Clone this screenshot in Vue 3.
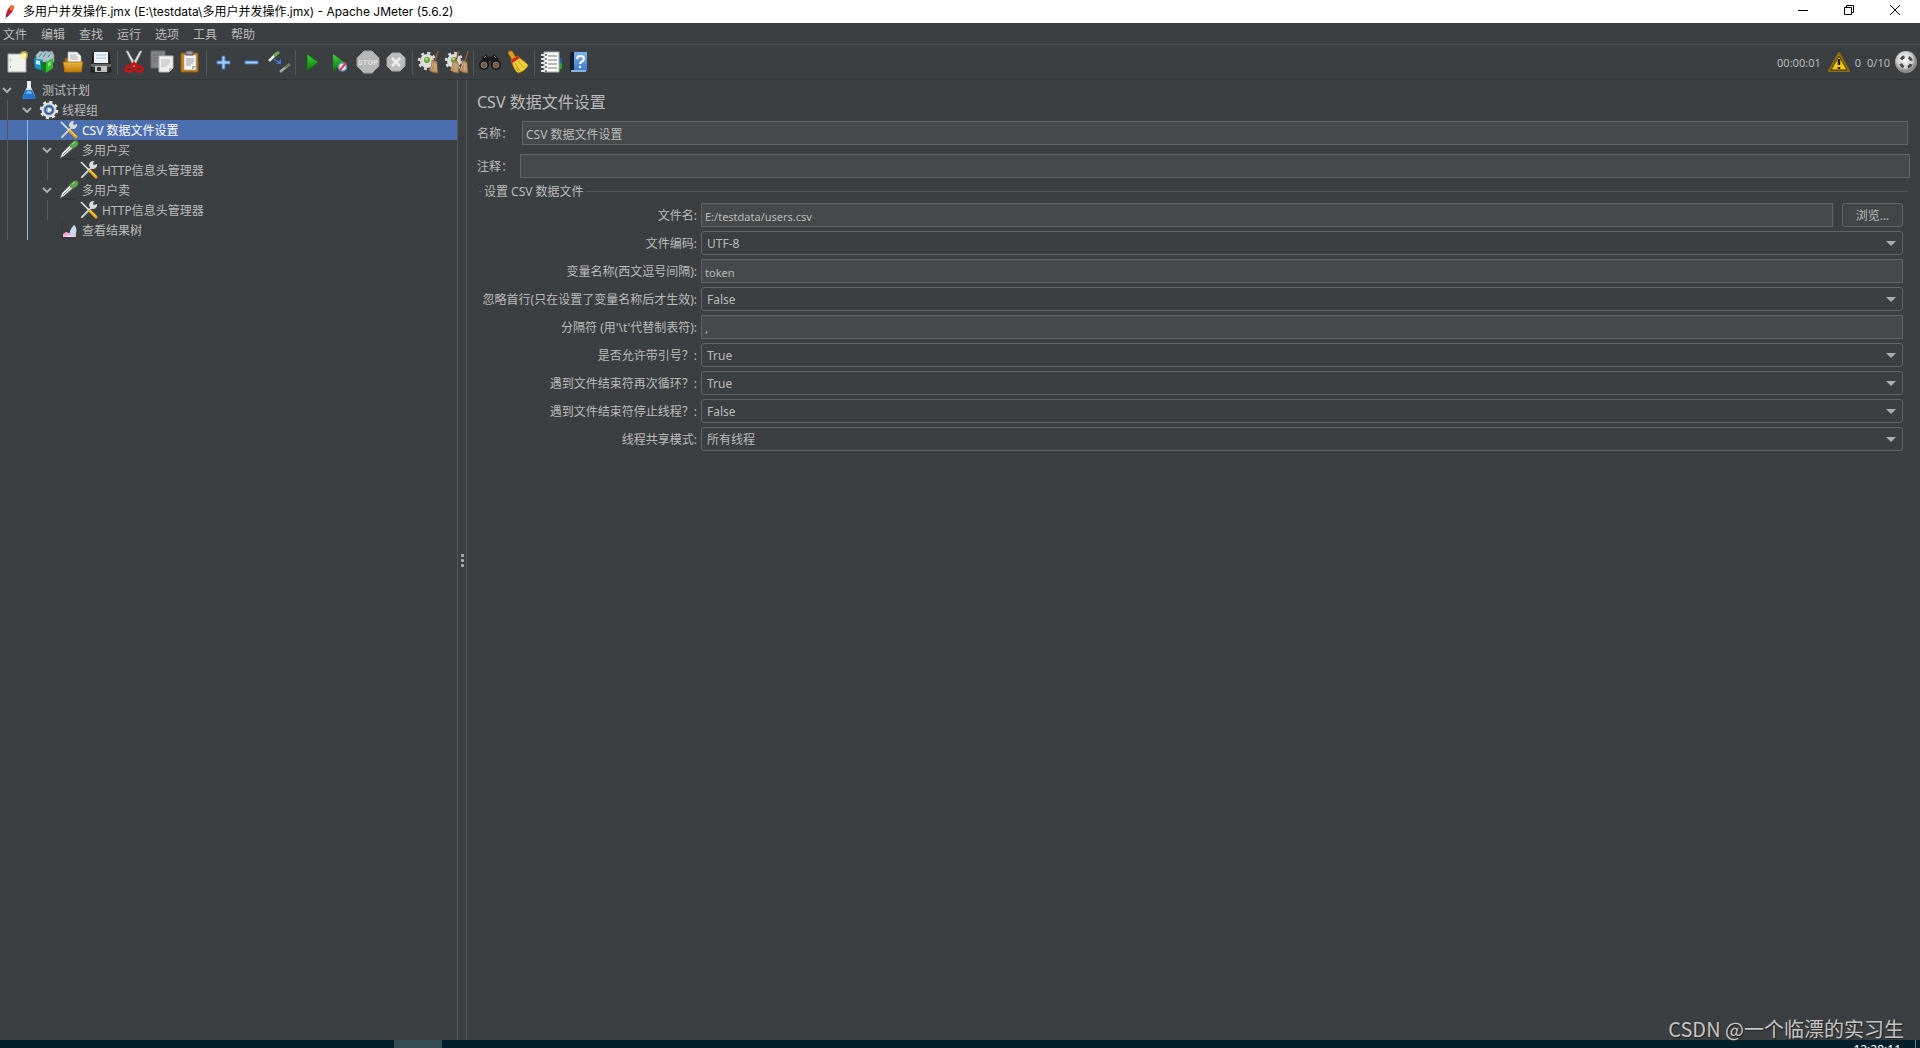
<script setup>
import { ref } from 'vue'

const menus = ['文件', '编辑', '查找', '运行', '选项', '工具', '帮助']

const toolGroups = [
  [['new', '新建'], ['templates', '模板'], ['open', '打开'], ['save', '保存']],
  [['cut', '剪切'], ['copy', '复制'], ['paste', '粘贴']],
  [['plus', '展开'], ['minus', '折叠'], ['toggle', '切换']],
  [['start', '启动'], ['start-no-pause', '不停顿开始'], ['stop', '停止'], ['shutdown', '关闭']],
  [['clear', '清除'], ['clear-all', '清除全部']],
  [['search', '查找'], ['broom', '重置搜索']],
  [['functions', '函数助手'], ['help', '帮助']]
]

const tree = [
  { label: '测试计划', icon: 'flask', open: true, guides: [] },
  { label: '线程组', icon: 'gear', open: true, guides: ['dim'] },
  { label: 'CSV 数据文件设置', icon: 'tools', selected: true, guides: ['dim', 'lit'] },
  { label: '多用户买', icon: 'pipette', open: true, guides: ['dim', 'lit'] },
  { label: 'HTTP信息头管理器', icon: 'tools', guides: ['dim', 'lit', 'dim'] },
  { label: '多用户卖', icon: 'pipette', open: true, guides: ['dim', 'lit'] },
  { label: 'HTTP信息头管理器', icon: 'tools', guides: ['dim', 'lit', 'dim'] },
  { label: '查看结果树', icon: 'chart', guides: ['dim', 'lit'] }
]

const name = ref('CSV 数据文件设置')
const comment = ref('')

const bools = ['True', 'False']
const fields = ref([
  { id: 'filename', label: '文件名:', value: 'E:/testdata/users.csv', browse: true },
  { id: 'encoding', label: '文件编码:', value: 'UTF-8', options: ['UTF-8'] },
  { id: 'variables', label: '变量名称(西文逗号间隔):', value: 'token' },
  { id: 'skip-first', label: '忽略首行(只在设置了变量名称后才生效):', value: 'False', options: bools },
  { id: 'delimiter', label: "分隔符 (用'\\t'代替制表符):", value: ',' },
  { id: 'quoted', label: '是否允许带引号？:', value: 'True', options: bools },
  { id: 'recycle', label: '遇到文件结束符再次循环？:', value: 'True', options: bools },
  { id: 'stop-thread', label: '遇到文件结束符停止线程？:', value: 'False', options: bools },
  { id: 'share-mode', label: '线程共享模式:', value: '所有线程', options: ['所有线程'] }
])
</script>

<template>
  <div class="app">
    <svg class="sprite" aria-hidden="true">
      <defs>
        <linearGradient id="g-green" x1="0" y1="0" x2="0" y2="1"><stop offset="0" stop-color="#3fd03a" /><stop offset="1" stop-color="#067a0b" /></linearGradient>
        <linearGradient id="g-gold" x1="0" y1="0" x2="0" y2="1"><stop offset="0" stop-color="#eab640" /><stop offset="1" stop-color="#c07c08" /></linearGradient>
        <linearGradient id="g-blue" x1="0" y1="0" x2="0" y2="1"><stop offset="0" stop-color="#7fb4ee" /><stop offset="1" stop-color="#3d78cc" /></linearGradient>
        <radialGradient id="g-ball" cx=".45" cy=".4"><stop offset="0" stop-color="#fff" /><stop offset=".7" stop-color="#d2d2d2" /><stop offset="1" stop-color="#8c8c8c" /></radialGradient>
      </defs>
      <symbol id="i-new" viewBox="0 0 24 24">
        <path d="M3 4h18v18H3z" fill="#f1f1ee" stroke="#a9a9a5" />
        <path d="M5.500 9v2M5.500 16v2" stroke="#aaa" />
        <circle cx="19" cy="5" r="4" fill="#ffe96b" opacity=".6" /><circle cx="19" cy="5" r="2" fill="#fff7a8" />
      </symbol>
      <symbol id="i-templates" viewBox="0 0 24 24">
        <path d="M3 5l4-4 3 1 3-1 3 1 3-1 2 4v7H3z" fill="#a9c3cb" stroke="#6e909a" stroke-width=".7" />
        <path d="M6 7l3-4M10 7l3-4M15 7l3-4" stroke="#5f7c86" />
        <path d="M1 8l9 2v11l-8-3z" fill="#1793d0" /><path d="M3 10l4 1v4l-4-1z" fill="#c4e9f7" />
        <path d="M8 11l5 3v9l-5-3z" fill="#0f7d19" /><path d="M13 12l7-4v10l-7 5z" fill="#35b932" /><path d="M15 13l3-2v4l-3 2z" fill="#7fe070" />
      </symbol>
      <symbol id="i-open" viewBox="0 0 24 24">
        <path d="M4 8h5l1 2h11v12H3z" fill="#a06c0b" />
        <path d="M7 2h9l4 4v8H7z" fill="#f5f5f5" stroke="#aaa" stroke-width=".7" /><path d="M9 5h6M9 7h8M9 9h8" stroke="#aaa" />
        <path d="M2 12h20l-2 10H4z" fill="url(#g-gold)" stroke="#a56b06" stroke-width=".8" />
      </symbol>
      <symbol id="i-save" viewBox="0 0 24 24">
        <path d="M4 3h16l1 10 1 9H2l1-9z" fill="#303030" stroke="#171717" /><path d="M5 2h14v11H5z" fill="#edf3f9" />
        <path d="M7 5h10M7 8h10" stroke="#9dc2e0" /><path d="M2 14h20v3H2z" fill="#666" /><path d="M6 16h12v6H6z" fill="#c2c2c2" /><path d="M8 17h4v4H8z" fill="#333" />
      </symbol>
      <symbol id="i-cut" viewBox="0 0 24 24">
        <path d="M4 1l2 0 8 14-2 2zM20 1l-2 0-8 14 2 2z" fill="#e7e7e7" stroke="#9a9a9a" stroke-width=".6" />
        <ellipse cx="7" cy="19" rx="3.500" ry="2.500" fill="none" stroke="#d90f0f" stroke-width="2.500" /><ellipse cx="17" cy="19" rx="3.500" ry="2.500" fill="none" stroke="#d90f0f" stroke-width="2.500" />
        <path d="M9 16l3-3 3 3" fill="none" stroke="#d90f0f" stroke-width="2.500" />
      </symbol>
      <symbol id="i-copy" viewBox="0 0 24 24">
        <path d="M1 1h14v17H1z" fill="#858585" stroke="#6c6c6c" /><path d="M3 5h9M3 8h9M3 11h9" stroke="#6d6d6d" />
        <path d="M9 6h14v12l-4 4H9z" fill="#efefef" stroke="#bcbcbc" /><path d="M11 10h9M11 12h9M11 14h8M11 16h6" stroke="#bbb" /><path d="M19 22v-4h4z" fill="#bdbdbd" />
      </symbol>
      <symbol id="i-paste" viewBox="0 0 24 24">
        <path d="M3 3h17v19H3z" fill="#c5831f" stroke="#8c5a13" /><path d="M6 5h12v15H6z" fill="#f7f7f7" stroke="#999" stroke-width=".6" />
        <path d="M8 1h7v4H8z" fill="#999" stroke="#555" /><path d="M8 9h8M8 11h8M8 13h7M8 15h5" stroke="#999" /><path d="M14 20v-4h4z" fill="#aaa" />
      </symbol>
      <symbol id="i-plus" viewBox="0 0 24 24"><path d="M11 6h3v5h5v3h-5v5h-3v-5H6v-3h5z" fill="#a9cdf5" stroke="#4579c4" /></symbol>
      <symbol id="i-minus" viewBox="0 0 24 24"><path d="M6 11h13v3H6z" fill="#a9cdf5" stroke="#4579c4" /></symbol>
      <symbol id="i-toggle" viewBox="0 0 24 24">
        <path d="M2 11l7-7" stroke="#e4e9e2" stroke-width="2.500" /><path d="M7 6l5-4" stroke="#67ad52" stroke-width="3" />
        <path d="M7 9l6 4" stroke="#3a7ad0" stroke-width="1.500" /><path d="M14 9v5H9z" fill="#3a7ad0" />
        <path d="M13 22l6-5" stroke="#a5aaa3" stroke-width="2.500" /><path d="M18 18l5-4" stroke="#60815a" stroke-width="3" />
      </symbol>
      <symbol id="i-start" viewBox="0 0 24 24"><path d="M7 4l11 8-11 9z" fill="url(#g-green)" stroke="#0a6d0d" stroke-width=".7" /></symbol>
      <symbol id="i-start-no-pause" viewBox="0 0 24 24">
        <path d="M5 4l11 8-11 9z" fill="url(#g-green)" /><circle cx="14.500" cy="17" r="4" fill="#dfe9f7" stroke="#6b95ca" stroke-width="1.500" /><path d="M12 20l6-7" stroke="#dc3f3f" stroke-width="2" />
      </symbol>
      <symbol id="i-stop" viewBox="0 0 24 24">
        <path d="M8 1h8l7 7v8l-7 7H8l-7-7V8z" fill="#b7b7b7" stroke="#a2a2a2" />
      </symbol>
      <symbol id="i-shutdown" viewBox="0 0 24 24">
        <path d="M8 3h8l5 5v8l-5 5H8l-5-5V8z" fill="#bcbcbc" stroke="#a9a9a9" /><path d="M8 8l8 8M16 8l-8 8" stroke="#eee" stroke-width="2.500" />
      </symbol>
      <symbol id="i-cog" viewBox="0 0 24 24">
        <circle cx="10" cy="11" r="7" fill="#dcdcdc" /><circle cx="10" cy="11" r="8" fill="none" stroke="#dcdcdc" stroke-width="2.500" stroke-dasharray="3 3.280" /><circle cx="10" cy="10" r="3" fill="#68a62f" /><circle cx="9.500" cy="9" r="1.500" fill="#a9da68" />
      </symbol>
      <symbol id="i-brush" viewBox="0 0 24 24">
        <path d="M21 1l-3 10" stroke="#8b5f31" stroke-width="1.500" /><path d="M15 10l5 2 1 11c-4 0-7-1-9-3 2-2 3-6 3-10z" fill="#b58e60" stroke="#816038" stroke-width=".6" /><path d="M16 13l-2 6M18 13l-1 8M19 14v7" stroke="#dbbd91" stroke-width=".7" />
      </symbol>
      <symbol id="i-clear" viewBox="0 0 24 24"><use href="#i-cog" /><use href="#i-brush" /></symbol>
      <symbol id="i-clear-all" viewBox="0 0 24 24"><use href="#i-cog" x="-1" /><use href="#i-brush" x="-7" /><use href="#i-brush" x="2" /></symbol>
      <symbol id="i-search" viewBox="0 0 24 24">
        <path d="M4 8l4-4 3 3h2l3-3 4 4 2 7h-8l-1-4h-2l-1 4H2z" fill="#1c1c1c" /><circle cx="6" cy="15" r="5" fill="#181818" /><circle cx="18" cy="15" r="5" fill="#181818" />
        <circle cx="6" cy="15" r="3" fill="#80573e" stroke="#777" /><circle cx="18" cy="15" r="3" fill="#80573e" stroke="#777" /><path d="M6 8l2-2M18 8l-2-2" stroke="#777" />
      </symbol>
      <symbol id="i-broom" viewBox="0 0 24 24">
        <path d="M3 1l3 0 4 6-4 3-4-7z" fill="#dc9c25" stroke="#94610d" stroke-width=".7" />
        <path d="M5 10l7-4c3 4 7 5 10 9-1 4-6 7-10 8-4-3-5-8-7-13z" fill="#efcf39" stroke="#ae7e0d" stroke-width=".8" /><path d="M5 10l7-4 2 2-8 5z" fill="#d3251e" /><path d="M9 13l5 8M12 11l6 7M10 17l2 4" stroke="#b78b13" stroke-width=".8" />
      </symbol>
      <symbol id="i-functions" viewBox="0 0 24 24">
        <path d="M19 8h4v5h-4z" fill="#285ea2" /><path d="M19 13h4v6h-4z" fill="#26a628" /><path d="M5 2h15v20H5z" fill="#fafafa" stroke="#aaa" /><path d="M9 6h9M9 10h9M9 14h9M9 18h9" stroke="#777" /><path d="M2 5h5M2 9h5M2 13h5M2 17h5M2 21h5" stroke="#e2e2e2" stroke-width="2" /><path d="M6 5h2M6 9h2M6 13h2M6 17h2M6 21h2" stroke="#222" />
      </symbol>
      <symbol id="i-help" viewBox="0 0 24 24">
        <path d="M4 2h15v20H3V4z" fill="#18202b" /><path d="M7 2h13v19H7z" fill="url(#g-blue)" /><path d="M4 20h15v2H4z" fill="#8fb2de" />
        <path d="M10 9c0-4 7-4 7 0 0 3-4 2-4 5" fill="none" stroke="#fff" stroke-width="2" /><circle cx="13" cy="17" r="1.200" fill="#fff" />
      </symbol>

      <symbol id="i-flask" viewBox="0 0 20 20">
        <path d="M8 1h4v6l4 9q1 3-2 3H6q-3 0-2-3l4-9z" fill="#dce9f6" /><path d="M7 10h6l3 6q1 3-2 3H6q-3 0-2-3z" fill="#2176d5" /><path d="M8 11h4l1 3H7z" fill="#68b2ff" /><path d="M10 2v8" stroke="#fff" stroke-width="1.500" />
      </symbol>
      <symbol id="i-gear" viewBox="0 0 20 20">
        <circle cx="10" cy="10" r="7.500" fill="#dce1e7" /><circle cx="10" cy="10" r="8" fill="none" stroke="#e3e5e8" stroke-width="2.500" stroke-dasharray="3.140 3.140" /><circle cx="10" cy="10" r="5" fill="#345583" stroke="#8097b5" /><circle cx="10" cy="10" r="3" fill="#8eb6e4" /><path d="M9 8l4 2-4 2z" fill="#fff" />
      </symbol>
      <symbol id="i-tools" viewBox="0 0 20 20">
        <path d="M14 6L3 17" stroke="#d0d0cb" stroke-width="2" stroke-linecap="round" /><path d="M18 4a4 4 0 1 1-3-3l-1 3 1 1z" fill="#d9d9d5" />
        <path d="M2 2l9 9" stroke="#efefef" stroke-width="1.500" /><path d="M11 11l6 6" stroke="#e9a816" stroke-width="3" stroke-linecap="round" /><path d="M11 10l6 6" stroke="#ffd65a" stroke-width="1" />
      </symbol>
      <symbol id="i-pipette" viewBox="0 0 20 20">
        <path d="M3 19h14" stroke="#2b2d2e" /><path d="M1 18l2-5 8-8 3 3-9 8z" fill="#ecefec" stroke="#6d716d" stroke-width=".8" /><path d="M4 15l8-8" stroke="#99a098" /><path d="M10 5l5-4c3-1 5 1 4 4l-5 4z" fill="#60a74d" stroke="#3f7733" stroke-width=".7" /><path d="M13 4l3-2" stroke="#abd89a" />
      </symbol>
      <symbol id="i-chart" viewBox="0 0 20 20">
        <path d="M3 2v16M3 18h15" stroke="#2b2d2f" stroke-width=".7" /><path d="M4 17v-3l3-2 3 1 3-2 4 2v4z" fill="#f0a9d8" /><path d="M15 5c3 2 3 7 1 10-2 1-5 0-5-3 0-2 2-5 4-7z" fill="#c4def9" /><path d="M5 17l5-2 7 2z" fill="#fbe3f3" />
      </symbol>
    </svg>

    <header class="titlebar">
      <svg class="feather" viewBox="0 0 16 20" aria-hidden="true"><path d="M3 15c1-5 2-9 7-13 3 0 3 3 1 7-2 3-4 5-7 6z" fill="#c6203b" /><path d="M10 2c3 0 3 3 1 6l-3 0c0-2 0-4 2-6z" fill="#ed7b23" /><path d="M2 18l3-5 2 1z" fill="#742370" /></svg>
      <h1 class="window-title">多用户并发操作.jmx (E:\testdata\多用户并发操作.jmx) - Apache JMeter (5.6.2)</h1>
      <div class="window-controls">
        <button type="button" aria-label="最小化"><svg viewBox="0 0 12 12"><path d="M1 6.500h10" /></svg></button>
        <button type="button" aria-label="还原"><svg viewBox="0 0 12 12"><path d="M1.500 3.500h7v7h-7zM3.500 3V1.500h7v7H9" /></svg></button>
        <button type="button" aria-label="关闭"><svg viewBox="0 0 12 12"><path d="M1 1l10 10M11 1L1 11" /></svg></button>
      </div>
    </header>

    <nav class="menubar">
      <button v-for="m in menus" :key="m" type="button">{{ m }}</button>
    </nav>

    <div class="toolbar" role="toolbar">
      <div v-for="(group, i) in toolGroups" :key="i" class="tool-group">
        <button v-for="[icon, label] in group" :key="icon" type="button" :aria-label="label">
          <svg><use :href="'#i-' + icon" /></svg>
          <span v-if="icon === 'stop'" class="stop-text">STOP</span>
        </button>
      </div>
      <div class="status">
        <span class="elapsed">00:00:01</span>
        <svg class="warn" viewBox="0 0 24 22" aria-hidden="true"><path d="M12 2L22 20H2z" fill="#f7c90c" stroke="#8a6d0a" stroke-width="2" stroke-linejoin="round" /><path d="M12 5L20 19H4z" fill="none" stroke="#30290a" /><path d="M12 8v6M12 16v2" stroke="#201b05" stroke-width="2.500" /></svg>
        <span class="errors">0</span>
        <span class="threads">0/10</span>
        <svg class="ball" viewBox="0 0 22 22" aria-hidden="true"><circle cx="11" cy="11" r="11" fill="url(#g-ball)" /><circle cx="11" cy="11" r="5.500" fill="none" stroke="#4a4a4a" stroke-width="3" stroke-dasharray="4.320 4.320" stroke-dashoffset="-2.160" /></svg>
      </div>
    </div>

    <main class="workspace">
      <aside class="tree">
        <ul>
          <li v-for="(node, i) in tree" :key="i" :class="{ selected: node.selected }">
            <span v-for="(g, j) in node.guides" :key="j" class="guide" :class="g"></span>
            <span class="twist">
              <svg v-if="node.open" viewBox="0 0 10 6"><path d="M1 1l4 4 4-4" /></svg>
            </span>
            <svg class="node-icon"><use :href="'#i-' + node.icon" /></svg>
            <span class="node-label">{{ node.label }}</span>
          </li>
        </ul>
      </aside>

      <div class="splitter"><i></i><i></i><i></i></div>

      <section class="editor">
        <h2>CSV 数据文件设置</h2>
        <div class="line name-line">
          <label for="name">名称：</label>
          <input id="name" v-model="name" type="text" />
        </div>
        <div class="line comment-line">
          <label for="comment">注释：</label>
          <input id="comment" v-model="comment" type="text" />
        </div>
        <fieldset>
          <legend>设置 CSV 数据文件</legend>
          <div v-for="f in fields" :key="f.id" class="field">
            <label :for="f.id">{{ f.label }}</label>
            <div v-if="f.options" class="combo">
              <select :id="f.id" v-model="f.value">
                <option v-for="o in f.options" :key="o">{{ o }}</option>
              </select>
              <svg viewBox="0 0 10 5" aria-hidden="true"><path d="M0 0h10L5 5z" /></svg>
            </div>
            <input v-else :id="f.id" v-model="f.value" type="text" />
            <button v-if="f.browse" type="button" class="browse">浏览...</button>
          </div>
        </fieldset>
      </section>
    </main>

    <footer class="taskbar">
      <span class="task"></span>
      <time>12:28:11</time>
    </footer>
    <div class="watermark">CSDN @一个临漂的实习生</div>
  </div>
</template>

<style>
body {
  margin: 0;
  background: #3c3f41;
}
</style>

<style scoped>
.app {
  position: relative;
  display: flex;
  flex-direction: column;
  min-height: 100vh;
  overflow: hidden;
  background: #3c3f41;
  color: #bbbbbb;
  font: 12px/16px "Noto Sans", "Noto Sans CJK SC", sans-serif;
}
* {
  box-sizing: border-box;
}
button,
input,
select {
  margin: 0;
  font: inherit;
  color: inherit;
}
.sprite {
  position: absolute;
  width: 0;
  height: 0;
}

.titlebar {
  display: flex;
  align-items: center;
  height: 23px;
  background: #fff;
  color: #000;
}
.feather {
  width: 14px;
  height: 18px;
  margin: 0 6px 0 3px;
}
.window-title {
  flex: 1;
  margin: 0;
  font-family: Inter, "Noto Sans CJK SC", sans-serif;
  font-size: 12px;
  font-weight: 400;
}
.window-controls {
  display: flex;
  align-self: flex-start;
  margin-right: 2px;
}
.window-controls button {
  display: flex;
  align-items: center;
  justify-content: center;
  width: 46px;
  height: 20px;
  padding: 0;
  border: 0;
  background: none;
}
.window-controls svg {
  width: 12px;
  height: 12px;
  fill: none;
  stroke: #000;
}

.menubar {
  display: flex;
  gap: 14px;
  height: 22px;
  padding-left: 3px;
  border-bottom: 1px solid #555555;
}
.menubar button {
  padding: 2px 0 0;
  border: 0;
  background: none;
}

.toolbar {
  display: flex;
  align-items: center;
  height: 35px;
  padding-left: 3px;
  border-bottom: 1px solid #323435;
}
.tool-group {
  display: flex;
}
.tool-group + .tool-group::before {
  content: "";
  width: 1px;
  height: 25px;
  margin: 0 2px;
  background: #555759;
}
.tool-group button {
  position: relative;
  display: flex;
  align-items: center;
  justify-content: center;
  width: 28px;
  height: 25px;
  padding: 0;
  border: 0;
  background: none;
}
.tool-group svg {
  width: 24px;
  height: 24px;
}
.stop-text {
  position: absolute;
  inset: 0;
  font: 700 8px/25px Roboto, sans-serif;
  text-align: center;
  color: #dedede;
}
.status {
  display: flex;
  align-items: center;
  margin-left: auto;
  padding-right: 3px;
  font-size: 11px;
}
.status span {
  padding-top: 1px;
}
.warn {
  width: 24px;
  height: 22px;
  margin: 0 4px 0 6px;
}
.threads {
  margin: 0 5px 0 6px;
}
.ball {
  width: 22px;
  height: 22px;
}

.workspace {
  display: flex;
  flex: 1;
}
.tree {
  width: 457px;
  flex: none;
}
.tree ul {
  margin: 0;
  padding: 0;
  list-style: none;
}
.tree li {
  display: flex;
  align-items: center;
  height: 20px;
}
.tree li.selected {
  background: #4b6eaf;
  color: #fff;
}
.guide {
  width: 20px;
  height: 20px;
  flex: none;
  background: linear-gradient(#57595b, #57595b) 7px 0 / 1px 20px no-repeat;
}
.guide.lit {
  background-image: linear-gradient(#7fbdf0, #7fbdf0);
}
.twist {
  display: flex;
  width: 19px;
  padding-left: 2px;
  flex: none;
}
.twist svg {
  width: 10px;
  height: 6px;
  fill: none;
  stroke: #adadad;
  stroke-width: 2;
}
.node-icon {
  width: 20px;
  height: 20px;
  margin-right: 3px;
}
.node-label {
  padding-top: 2px;
}

.splitter {
  display: flex;
  flex-direction: column;
  align-items: center;
  justify-content: center;
  gap: 2px;
  width: 10px;
  flex: none;
  border: solid #555759;
  border-width: 0 1px;
}
.splitter i {
  width: 3px;
  height: 3px;
  border-radius: 1px;
  background: #adadad;
}

.editor {
  flex: 1;
  min-width: 0;
  padding: 10px 10px 0;
}
.editor h2 {
  margin: 0 0 7px;
  font-size: 16px;
  line-height: 24px;
  font-weight: 400;
}
.line {
  display: flex;
  align-items: center;
}
.name-line {
  padding-right: 2px;
  margin-bottom: 9px;
}
.line label {
  width: 43px;
  padding-top: 2px;
  flex: none;
}
.name-line label {
  width: 45px;
}
input {
  flex: 1;
  min-width: 0;
  height: 24px;
  padding: 2px 3px 0;
  border: 1px solid #646464;
  background: #45494a;
  outline: 0;
}
fieldset {
  min-width: 0;
  margin: 5px 2px 0;
  padding: 4px 5px 0 0;
  border: 0;
  border-top: 1px solid #555759;
}
legend {
  height: 16px;
  margin-left: 3px;
  padding: 1px 2px 0;
}
.field {
  display: flex;
  align-items: center;
  margin-bottom: 4px;
}
.field label {
  width: 222px;
  padding: 2px 4px 0 0;
  flex: none;
  text-align: right;
  white-space: nowrap;
}
.field input {
  font-size: 11px;
}
.combo {
  position: relative;
  flex: 1;
}
.combo select {
  display: block;
  width: 100%;
  height: 24px;
  padding: 2px 5px 0;
  border: 1px solid #646464;
  border-radius: 3px;
  background: #3c3f41;
  appearance: none;
  outline: 0;
}
.combo svg {
  position: absolute;
  top: 10px;
  right: 7px;
  width: 10px;
  height: 5px;
  fill: #adadad;
  pointer-events: none;
}
.browse {
  width: 61px;
  height: 24px;
  margin-left: 9px;
  padding: 2px 0 0;
  border: 1px solid #646464;
  border-radius: 3px;
  background: #414546;
}

.taskbar {
  display: flex;
  justify-content: space-between;
  height: 8px;
  overflow: hidden;
  background: #00212b;
}
.task {
  width: 48px;
  margin-left: 394px;
  background: #344e53;
}
.taskbar time {
  margin-right: 4px;
  padding: 2px 14px 0 0;
  border-right: 1px solid #6b7d83;
  color: #fff;
}
.watermark {
  position: absolute;
  right: 16px;
  bottom: 5px;
  color: #c4c4c4;
  font-family: "Noto Sans CJK SC", sans-serif;
  font-size: 20px;
  line-height: 28px;
  text-shadow: 1px 1px 1px #222;
}
</style>
